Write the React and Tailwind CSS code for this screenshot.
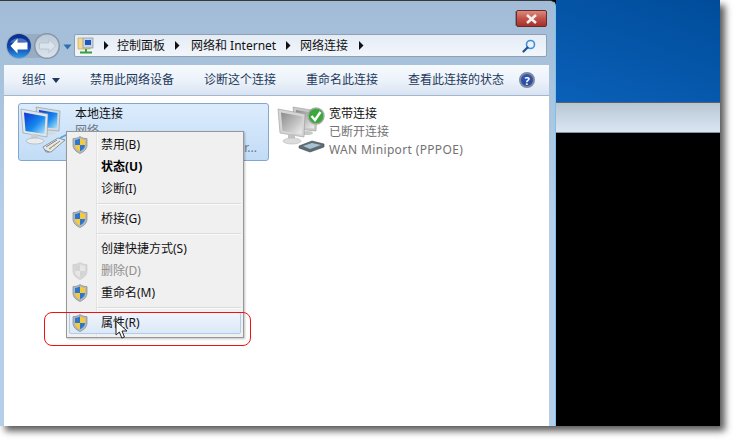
import React from "react";

const FONT = { fontFamily: '"Noto Sans","Noto Sans CJK SC",sans-serif' };

function Shield({ disabled }) {
  const a = disabled ? "#d4d4d4" : "#2a76d2";
  const b = disabled ? "#e6e6e6" : "#f7cb35";
  return (
    <svg width="16" height="18" viewBox="0 0 16 18">
      <path d="M8 .5 C10 2 12.5 2.6 15 2.6 L15 9 C15 13 12 15.8 8 17.5 C4 15.8 1 13 1 9 L1 2.6 C3.5 2.6 6 2 8 .5Z" fill={disabled ? "#d8d8d8" : "#b4b8ba"} stroke={disabled ? "#c8c8c8" : "#83888b"} strokeWidth=".7" />
      <path d="M8 2.6 L8 9 L3 9 L3 4 C4.8 4 6.4 3.5 8 2.6Z" fill={a} />
      <path d="M8 2.6 C9.6 3.5 11.2 4 13 4 L13 9 L8 9Z" fill={b} />
      <path d="M3 9 L8 9 L8 15.2 C5 13.8 3 12 3 9Z" fill={b} />
      <path d="M13 9 L8 9 L8 15.2 C11 13.8 13 12 13 9Z" fill={a} />
    </svg>
  );
}

function Arrow() {
  return (
    <svg width="6" height="9" viewBox="0 0 6 9"><path d="M1 0 L5.5 4.5 L1 9Z" fill="#111" /></svg>
  );
}

function NavCluster() {
  return (
    <svg width="54" height="28" viewBox="0 0 54 28" className="shrink-0">
      <defs>
        <linearGradient id="navb" x1="0" y1="0" x2="0" y2="1">
          <stop offset="0" stopColor="#0b2c86" />
          <stop offset=".55" stopColor="#0f47ad" />
          <stop offset="1" stopColor="#2f9be8" />
        </linearGradient>
        <linearGradient id="navf" x1="0" y1="0" x2="0" y2="1">
          <stop offset="0" stopColor="#bccad8" />
          <stop offset="1" stopColor="#d9e3ed" />
        </linearGradient>
      </defs>
      <rect x="10" y="2" width="34" height="24" rx="12" fill="#98acc2" />
      <circle cx="41" cy="14" r="13" fill="#8796a8" />
      <circle cx="41" cy="14" r="11.5" fill="url(#navf)" />
      <path d="M43 7.5 L49.5 14 L43 20.5 L43 17 L33.5 17 L33.5 11 L43 11Z" fill="#dbe4ed" stroke="#b3c0cd" strokeWidth=".8" />
      <circle cx="13" cy="14" r="13" fill="#93a9c1" />
      <circle cx="13" cy="14" r="12" fill="url(#navb)" />
      <path d="M4 11 A9.5 7 0 0 1 22 11 A14 5 0 0 0 4 11Z" fill="#7ea6e4" opacity=".55" />
      <path d="M11.5 6.5 L4.5 14 L11.5 21.5 L11.5 17.5 L21.5 17.5 L21.5 10.5 L11.5 10.5Z" fill="#fff" />
    </svg>
  );
}

function MonitorPair({ gray }) {
  const id = gray ? "gs" : "bs";
  const frame = gray ? "#c9c9c9" : "#d4dbe0";
  const edge = gray ? "#9a9a9a" : "#8e969c";
  return (
    <>
      <defs>
        <linearGradient id="bs" x1="0" y1="0" x2="1" y2="1"><stop offset="0" stopColor="#0a36d4" /><stop offset=".55" stopColor="#1788ee" /><stop offset="1" stopColor="#b4e6fc" /></linearGradient>
        <linearGradient id="gs" x1="0" y1="0" x2="1" y2="1"><stop offset="0" stopColor="#8a8a8a" /><stop offset=".6" stopColor="#c4c4c4" /><stop offset="1" stopColor="#f0f0f0" /></linearGradient>
      </defs>
      <path d="M16 2 L40 6 L39 26 L18 24Z" fill={frame} stroke={edge} strokeWidth=".6" />
      <path d="M19 5 L37.5 8 L37 23.5 L20 22Z" fill={`url(#${id})`} />
      <ellipse cx="30" cy="28" rx="6" ry="2" fill={frame} />
      <path d="M1 4 L28 9 L27 32 L3 28Z" fill={gray ? "#d6d6d6" : "#e2e6ea"} stroke={edge} strokeWidth=".6" />
      <path d="M4 7.5 L25.5 11.5 L24.5 29 L5.5 26Z" fill={`url(#${id})`} />
      <rect x="11" y="29" width="7" height="6" fill={gray ? "#c2c2c2" : "#c8ced2"} />
      <ellipse cx="15" cy="36" rx="9" ry="3" fill={gray ? "#dcdcdc" : "#e8ecee"} stroke={gray ? "#b8b8b8" : "#a4a8aa"} strokeWidth=".6" />
    </>
  );
}

function LocalIcon() {
  return (
    <svg width="50" height="50" viewBox="0 0 50 50">
      <MonitorPair />
      <path d="M23 42 L38 33 L45 35 L31 47 L26 47Z" fill="#e6e9ea" stroke="#6f6f6f" strokeWidth=".7" />
      <path d="M26 42 L37 35 M29 44 L40 36 M25 45 L29 47" stroke="#7b7b7b" strokeWidth=".9" />
      <path d="M29 43 L31 44 M33 40 L35 41" stroke="#d2a93a" strokeWidth="1.2" />
      <path d="M40 33 L48 29" stroke="#4fa6d8" strokeWidth="1.8" />
    </svg>
  );
}

function BroadbandIcon() {
  return (
    <svg width="50" height="50" viewBox="0 0 50 50">
      <MonitorPair gray />
      <path d="M22 41 L35 36 L47 39 L47 42 L33 47 L22 43Z" fill="#5d6c74" stroke="#3f4a50" strokeWidth=".6" />
      <path d="M26 41 L35 38 L44 40 L33 44Z" fill="#a8c3cf" />
    </svg>
  );
}

function MenuItem({ label, bold, disabled, shield, hot }) {
  return (
    <div className={`h-[22px] flex items-center ${hot ? "mx-[2px] rounded-[2px] border border-[#aecdee] bg-gradient-to-b from-[#eff5fc] to-[#dbe8f7]" : ""}`}>
      <div className={`${hot ? "w-[29px] pr-[9px]" : "w-[32px] pr-[6px]"} flex justify-center shrink-0`}>{shield ? <Shield disabled={disabled} /> : null}</div>
      <span className="ml-[2px] text-[12px] leading-none">
        <span className={bold ? "font-bold text-black" : disabled ? "text-[#8d8d8d]" : "text-[#111]"}>{label}</span>
      </span>
    </div>
  );
}

function Sep() {
  return (
    <div className="h-[8px] flex items-center pl-[30px] pr-[2px]">
      <div className="w-full h-[2px] border-t border-[#dcdcdc] bg-white/70" />
    </div>
  );
}

export default function App() {
  return (
    <div className="w-[739px] h-[444px] bg-white overflow-hidden relative" style={FONT}>
      <div className="w-[720px] h-[426px] flex shadow-[5px_5px_7px_rgba(0,0,0,0.65)] bg-black">
        {/* Window */}
        <div className="w-[556px] h-full shrink-0 flex flex-col bg-gradient-to-b from-[#a2bbd6] via-[#b6cfe8] to-[#b5cfe9] border-t border-[#3a3a3a] border-r border-r-[#74c5ee] rounded-tr-[6px] pl-[4px] pr-[6px]">
          <div className="h-[33px] flex justify-end items-start pt-[9px] shrink-0">
            <div className="w-[31px] h-[17px] rounded-[2px] border border-[#6b2a2a] bg-gradient-to-b from-[#d98a7e] via-[#c3524a] to-[#a52f2b] flex items-center justify-center mr-[2px] shadow-[-2px_0_0_-1px_rgba(70,90,110,0.5)]">
              <svg width="13" height="10" viewBox="0 0 13 10"><path d="M2 1 L11 9 M11 1 L2 9" stroke="#f4f0ee" strokeWidth="2.6" /></svg>
            </div>
          </div>

          <div className="h-[24px] flex items-center shrink-0">
            <div className="w-[71px] pl-[2px] flex items-center shrink-0">
              <NavCluster />
              <svg width="9" height="6" viewBox="0 0 9 6" className="ml-[3px] mt-[2px] shrink-0"><path d="M.5 .5 L8.5 .5 L4.5 5.5Z" fill="#2f6fb0" /></svg>
            </div>
            <div className="w-[473px] h-[23px] self-start ml-[-1px] rounded-[2px] border border-[#8fa0b3] bg-gradient-to-b from-[#e4ecf5] to-[#f2f6fb] flex items-center text-[12px] text-[#111]">
              <svg width="18" height="20" viewBox="0 0 18 20" className="ml-[2px] shrink-0">
                <path d="M1 2 H6 L7.5 4 H13 V13 H1Z" fill="#f3d98a" stroke="#b99d4a" strokeWidth=".6" />
                <rect x="6" y="2" width="10" height="10" fill="#c9d3de" stroke="#7c8894" strokeWidth=".6" />
                <rect x="8" y="4" width="6" height="5" fill="#1a58c0" />
                <path d="M9 13 V16 M3 16.5 H15" stroke="#36a03c" strokeWidth="2" />
              </svg>
              <span className="ml-[8px]"><Arrow /></span>
              <span className="ml-[8px] w-[48px] shrink-0 leading-none">控制面板</span>
              <span className="ml-[9px]"><Arrow /></span>
              <span className="ml-[11px] w-[84px] shrink-0 leading-none whitespace-nowrap">网络和 Internet</span>
              <span className="ml-[10px]"><Arrow /></span>
              <span className="ml-[9px] w-[48px] shrink-0 leading-none">网络连接</span>
              <span className="ml-[10px]"><Arrow /></span>
              <svg width="14" height="14" viewBox="0 0 14 14" className="ml-auto mr-[10px]">
                <circle cx="8.5" cy="5.5" r="4" fill="#e8f2fb" stroke="#3f8fd8" strokeWidth="1.6" />
                <path d="M5.5 8.5 L1.5 12.5" stroke="#234f93" strokeWidth="2.2" strokeLinecap="round" />
              </svg>
            </div>
          </div>

          <div className="h-[7px] shrink-0" />

          <div className="flex-1 min-h-0 flex flex-col bg-white">
            <div className="h-[31px] shrink-0 flex items-center text-[12px] text-[#1e395b] bg-gradient-to-b from-[#f6fafe] via-[#edf3fa] to-[#d8e3f2] border-b border-[#a3b6cd]">
              <span className="ml-[18px] leading-none">组织</span>
              <svg width="8" height="5" viewBox="0 0 8 5" className="ml-[6px]"><path d="M0 0 H8 L4 5Z" fill="#1e395b" /></svg>
              <span className="ml-[30px] leading-none">禁用此网络设备</span>
              <span className="ml-[30px] leading-none">诊断这个连接</span>
              <span className="ml-[30px] leading-none">重命名此连接</span>
              <span className="ml-[30px] leading-none">查看此连接的状态</span>
              <div className="ml-[15px] w-[16px] h-[16px] rounded-full border-[2px] border-[#7c8ba0] bg-gradient-to-b from-[#3558b0] to-[#2a48a0] flex items-center justify-center text-[11px] font-bold text-white leading-none">?</div>
            </div>

            <div className="flex gap-[8px] pl-[14px] pt-[7px]">
              <div className="w-[251px] h-[58px] shrink-0 rounded-[3px] border border-[#84a7d1] bg-gradient-to-b from-[#dcecfd] to-[#c2dcf6] flex overflow-hidden">
                <div className="w-[56px] shrink-0 pt-[1px] pl-[1px]"><LocalIcon /></div>
                <div className="flex-1 min-w-0 pt-[1px] text-[12px] leading-[18px]">
                  <div className="text-[#111]">本地连接</div>
                  <div className="text-[#6f7a86] -mt-[1px]">网络</div>
                  <div className="text-[#6f7a86] whitespace-nowrap flex justify-end pr-[11px] -mt-[1px]">Controller...</div>
                </div>
              </div>
              <div className="flex">
                <div className="relative w-[52px] shrink-0 pt-[2px]">
                  <BroadbandIcon />
                  <svg width="18" height="18" viewBox="0 0 18 18" className="absolute left-[30px] top-[4px]">
                    <circle cx="9" cy="9" r="8" fill="#3aa83a" stroke="#a8a8a8" strokeWidth="1.4" />
                    <path d="M4.5 9 L8 13 L13.5 5" fill="none" stroke="#fff" strokeWidth="2.4" />
                  </svg>
                </div>
                <div className="pt-[2px] text-[12px] leading-[18px]">
                  <div className="text-[#111]">宽带连接</div>
                  <div className="text-[#737373]">已断开连接</div>
                  <div className="text-[#737373] whitespace-nowrap tracking-[0.35px]">WAN Miniport (PPPOE)</div>
                </div>
              </div>
            </div>
          </div>
        </div>

        {/* Desktop */}
        <div className="flex-1 flex flex-col">
          <div className="h-[102px] shrink-0 bg-[linear-gradient(200deg,#004c9a,#0a60b8)]" />
          <div className="h-[31px] shrink-0 bg-gradient-to-b from-[#b8c6d3] to-[#dbe6f3] border-t border-[#5a6068] border-b border-b-[#8f9396]" />
          <div className="flex-1 bg-black" />
        </div>
      </div>

      {/* Context menu */}
      <div className="absolute left-[66px] top-[131px] w-[178px] h-[207px] bg-[#f0f0f0] border border-[#979797] py-[2px] shadow-[1px_1px_2px_rgba(0,0,0,0.25)]">
        <div className="absolute left-[29px] top-0 bottom-0 w-[2px] border-l border-[#e2e3e3] bg-white/60" />
        <div className="relative">
          <MenuItem label="禁用(B)" shield />
          <MenuItem label="状态(U)" bold />
          <MenuItem label="诊断(I)" />
          <Sep />
          <MenuItem label="桥接(G)" shield />
          <Sep />
          <MenuItem label="创建快捷方式(S)" />
          <MenuItem label="删除(D)" shield disabled />
          <MenuItem label="重命名(M)" shield />
          <Sep />
          <MenuItem label="属性(R)" shield hot />
        </div>
      </div>

      {/* Annotation */}
      <div className="absolute left-[44px] top-[312px] w-[207px] h-[34px] rounded-[8px] border border-[#f01010]" />

      {/* Cursor */}
      <svg width="14" height="20" viewBox="0 0 14 20" className="absolute left-[115px] top-[320px]">
        <path d="M1 1 L1 15 L4.4 12 L6.8 18 L9.4 17 L7 11 L12 11Z" fill="#fff" stroke="#222" strokeWidth="1" />
      </svg>
    </div>
  );
}
